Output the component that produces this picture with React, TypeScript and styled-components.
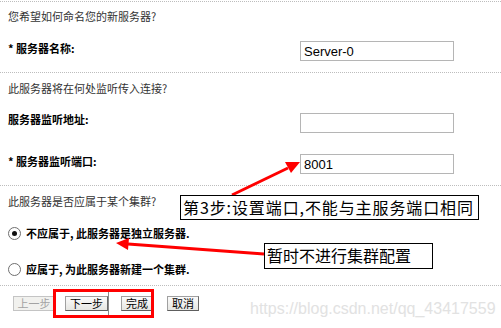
import { createGlobalStyle, styled } from "styled-components";

const GlobalStyle = createGlobalStyle`
  html, body {
    margin: 0;
    padding: 0;
    background: #ffffff;
  }
  body {
    font-family: "Noto Sans CJK SC", "Liberation Sans", sans-serif;
  }
`;

const Page = styled.div`
  position: relative;
  width: 501px;
  height: 328px;
  overflow: hidden;
  background: #ffffff;
  padding-top: 1px;
  box-sizing: border-box;
`;

const Section = styled.div<{ padBottom: number }>`
  border-top: 1px dotted #bdbdbd;
  padding: 0 47px ${({ padBottom }) => padBottom}px 8px;
`;

const Question = styled.div<{ top: number }>`
  margin-top: ${({ top }) => top}px;
  font-size: 11px;
  line-height: 14px;
  color: #333333;
`;

const FieldRow = styled.div<{ top: number }>`
  display: flex;
  align-items: flex-start;
  margin-top: ${({ top }) => top}px;
`;

const Label = styled.div<{ shift?: number }>`
  flex: 1;
  font-size: 11px;
  line-height: 14px;
  font-weight: 700;
  color: #000000;
  margin-top: ${({ shift }) => shift ?? 0}px;
`;

const TextInput = styled.input`
  width: 154px;
  height: 20px;
  box-sizing: border-box;
  border: 1px solid #b5b5b5;
  padding: 0 3px;
  font-family: "Liberation Sans", Arial, sans-serif;
  font-size: 13px;
  color: #000000;
  background: #ffffff;
  outline: none;
`;

const RadioRow = styled.div<{ top: number }>`
  display: flex;
  align-items: center;
  gap: 5px;
  margin-top: ${({ top }) => top}px;
  height: 14px;
  font-size: 11px;
  font-weight: 700;
  color: #000000;
`;

const RadioDot = styled.span<{ checked?: boolean }>`
  position: relative;
  width: 13px;
  height: 13px;
  box-sizing: border-box;
  border: 1px solid #6f6f6f;
  border-radius: 50%;
  background: #ffffff;
  flex: none;

  &::after {
    content: "";
    display: ${({ checked }) => (checked ? "block" : "none")};
    position: absolute;
    left: 3px;
    top: 3px;
    width: 5px;
    height: 5px;
    border-radius: 50%;
    background: #111111;
  }
`;

const ButtonBar = styled.div`
  display: flex;
  align-items: center;
  margin-top: 10px;
  padding-left: 5px;
`;

const Button = styled.button<{ w: number; gapLeft: number }>`
  width: ${({ w }) => w}px;
  height: 15px;
  margin-left: ${({ gapLeft }) => gapLeft}px;
  padding: 0;
  box-sizing: border-box;
  border: 1px solid #7e7e7e;
  border-color: #a0a0a0 #6a6a6a #5e5e5e #a0a0a0;
  background: linear-gradient(#fbfbfb, #e6e6e2);
  font-family: "Noto Sans CJK SC", sans-serif;
  font-size: 11px;
  line-height: 13px;
  color: #000000;

  &:disabled {
    color: #a3a3a3;
    border-color: #c4c4c4;
    background: #f1f1ee;
  }
`;

const Callout = styled.div<{ x: number; y: number; w: number; h: number; spacing?: number }>`
  position: absolute;
  left: ${({ x }) => x}px;
  top: ${({ y }) => y}px;
  width: ${({ w }) => w}px;
  height: ${({ h }) => h}px;
  box-sizing: border-box;
  border: 1px solid #000000;
  background: #ffffff;
  padding-left: 2px;
  font-size: 16px;
  line-height: 23px;
  letter-spacing: ${({ spacing }) => spacing ?? 0}px;
  color: #000000;
  white-space: nowrap;
`;

const RedFrame = styled.div`
  position: absolute;
  left: 53px;
  top: 289px;
  width: 101px;
  height: 29px;
  box-sizing: border-box;
  border: 3px solid #ff0000;

  &::after {
    content: "";
    position: absolute;
    left: 52px;
    top: 0;
    bottom: 0;
    width: 1px;
    background: #8a8a8a;
  }
`;

const Arrows = styled.svg`
  position: absolute;
  left: 0;
  top: 0;
  pointer-events: none;
`;

const Watermark = styled.div`
  position: absolute;
  left: 250px;
  top: 299px;
  font-family: "Liberation Sans", Arial, sans-serif;
  font-size: 16px;
  line-height: 20px;
  color: #e2e2e2;
  white-space: nowrap;
`;

export default function App() {
  return (
    <Page>
      <GlobalStyle />
      <Section padBottom={11}>
        <Question top={7}>您希望如何命名您的新服务器?</Question>
        <FieldRow top={18}>
          <Label>* 服务器名称:</Label>
          <TextInput defaultValue="Server-0" />
        </FieldRow>
      </Section>
      <Section padBottom={11}>
        <Question top={8}>此服务器将在何处监听传入连接?</Question>
        <FieldRow top={18}>
          <Label shift={-1}>服务器监听地址:</Label>
          <TextInput defaultValue="" />
        </FieldRow>
        <FieldRow top={21}>
          <Label>* 服务器监听端口:</Label>
          <TextInput defaultValue="8001" />
        </FieldRow>
      </Section>
      <Section padBottom={9}>
        <Question top={8}>此服务器是否应属于某个集群?</Question>
        <RadioRow top={18}>
          <RadioDot checked />
          不应属于, 此服务器是独立服务器.
        </RadioRow>
        <RadioRow top={22}>
          <RadioDot />
          应属于, 为此服务器新建一个集群.
        </RadioRow>
      </Section>
      <Section padBottom={0}>
        <ButtonBar>
          <Button w={42} gapLeft={0} disabled>
            上一步
          </Button>
          <Button w={43} gapLeft={10}>
            下一步
          </Button>
          <Button w={32} gapLeft={13}>
            完成
          </Button>
          <Button w={32} gapLeft={14}>
            取消
          </Button>
        </ButtonBar>
      </Section>

      <Watermark>https://blog.csdn.net/qq_43417559</Watermark>

      <Arrows width="501" height="328" viewBox="0 0 501 328">
        <line x1="232" y1="195" x2="288" y2="168" stroke="#ff0000" strokeWidth="3" />
        <polygon points="300,162 285,162 291,173" fill="#ff0000" />
        <line x1="264" y1="254" x2="128" y2="244" stroke="#ff0000" strokeWidth="3" />
        <polygon points="116,243 129,238 128,250" fill="#ff0000" />
      </Arrows>

      <Callout x={180} y={195} w={299} h={25} spacing={0.9}>
        第3步:设置端口,不能与主服务端口相同
      </Callout>
      <Callout x={264} y={243} w={169} h={26}>
        暂时不进行集群配置
      </Callout>
      <RedFrame />
    </Page>
  );
}
